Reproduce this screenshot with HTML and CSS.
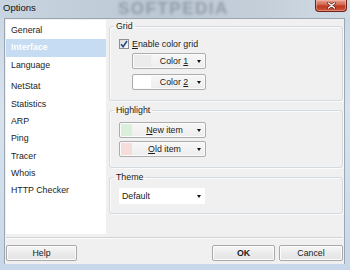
FILE: index.html
```html
<!DOCTYPE html>
<html>
<head>
<meta charset="utf-8">
<link rel="stylesheet" href="styles.css">
</head>
<body>
<div class="win">
  <div class="title">
    <span class="ttl">Options</span>
    <div class="wm-title">SOFTPEDIA</div>
    <div class="close">
      <svg width="9" height="7" viewBox="0 0 9 7"><path d="M1.5 1 L7.5 6 M7.5 1 L1.5 6" stroke="#5a1a12" stroke-width="2.6" stroke-linecap="round"/><path d="M1.5 1 L7.5 6 M7.5 1 L1.5 6" stroke="#ffffff" stroke-width="1.4" stroke-linecap="round"/></svg>
    </div>
  </div>
  <div class="client">
    <div class="main">
      <ul class="nav">
        <li>General</li>
        <li class="sel">Interface</li>
        <li>Language</li>
        <li class="grp-start">NetStat</li>
        <li>Statistics</li>
        <li>ARP</li>
        <li>Ping</li>
        <li>Tracer</li>
        <li>Whois</li>
        <li>HTTP Checker</li>
      </ul>
      <div class="pane">
        <fieldset class="grp">
          <legend>Grid</legend>
          <div class="gbody grid-body">
            <label class="chk-row">
              <span class="chk"><svg width="8" height="8" viewBox="0 0 8 8"><path d="M1 4.2 L3.1 6.6 L7 1" fill="none" stroke="#2b4a8c" stroke-width="1.6"/></svg></span>
              <span><u>E</u>nable color grid</span>
            </label>
            <div class="colors">
              <div class="cbtn"><span class="sw sw-grey"></span><span class="ctext">Color <u>1</u></span><span class="arr"></span></div>
              <div class="cbtn"><span class="sw sw-white"></span><span class="ctext">Color <u>2</u></span><span class="arr"></span></div>
            </div>
          </div>
        </fieldset>
        <fieldset class="grp grp-hl">
          <legend>Highlight</legend>
          <div class="gbody hl-body">
            <div class="cbtn hbtn"><span class="sw2 sw-green"></span><span class="ctext"><u>N</u>ew item</span><span class="arr"></span></div>
            <div class="cbtn hbtn"><span class="sw2 sw-pink"></span><span class="ctext"><u>O</u>ld item</span><span class="arr"></span></div>
          </div>
        </fieldset>
        <fieldset class="grp grp-theme">
          <legend>Theme</legend>
          <div class="gbody theme-body">
            <div class="combo"><span class="ctext-l">Default</span><span class="arr"></span></div>
          </div>
        </fieldset>
      </div>
    </div>
    <div class="sep"></div>
    <div class="foot">
      <div class="btn help">Help</div>
      <div class="btn ok">OK</div>
      <div class="btn cancel">Cancel</div>
    </div>
  </div>
</div>
</body>
</html>
```

FILE: styles.css
```css
* { box-sizing: border-box; }
html, body { margin: 0; padding: 0; }
body {
  width: 350px;
  height: 270px;
  overflow: hidden;
  font-family: "Liberation Sans", Arial, sans-serif;
  font-size: 8.8px;
  color: #1b1b1b;
}
.win {
  position: relative;
  width: 350px;
  height: 270px;
  display: flex;
  flex-direction: column;
  background: linear-gradient(#c9d6e3, #d9e3ed 40%, #c8d8ea);
  overflow: hidden;
}
.title {
  position: relative;
  height: 18px;
  flex: none;
  display: flex;
  align-items: flex-start;
  background: linear-gradient(90deg, #c8d4e0, #bcc8d4 45%, #c4cfda 75%, #d1dbe5);
}
.ttl {
  position: relative;
  z-index: 2;
  margin: 2px 0 0 3px;
  font-size: 9.5px;
  line-height: 11px;
  color: #111;
}
.wm-title {
  position: absolute;
  left: 118px;
  top: 0;
  font-size: 17px;
  line-height: 17px;
  font-weight: bold;
  letter-spacing: 1.5px;
  color: rgba(85, 96, 108, 0.42);
  filter: blur(1.4px);
  z-index: 1;
}
.close {
  position: relative;
  z-index: 2;
  margin-left: auto;
  margin-right: 3px;
  width: 32px;
  height: 12px;
  border: 1px solid #6d2219;
  border-top: none;
  border-radius: 0 0 4px 4px;
  background: linear-gradient(#e6a08f, #d46a55 40%, #bf3a22 55%, #c9553b);
  box-shadow: inset 0 0 0 1px rgba(255, 200, 190, 0.45);
  display: flex;
  align-items: center;
  justify-content: center;
}
.close svg { display: block; }
.client {
  position: relative;
  flex: none;
  margin-left: 4px;
  width: 341px;
  height: 246px;
  border: 1px solid #9aa6b2;
  border-bottom: none;
  background: #f0f0f0;
  display: flex;
  flex-direction: column;
}
.main {
  display: flex;
  padding: 1px 1px 0 1px;
  flex: none;
}
.nav {
  width: 100px;
  height: 214px;
  margin: 0;
  padding: 2px 0 0 0;
  list-style: none;
  background: #fff;
}
.nav li {
  height: 17.33px;
  line-height: 17.33px;
  padding-left: 5px;
  white-space: nowrap;
}
.nav li.sel {
  background: #c5dcf3;
  color: #fff;
  font-weight: bold;
}
.nav li.grp-start { margin-top: 4.4px; }
.pane {
  margin-left: 3px;
  width: 234px;
  display: flex;
  flex-direction: column;
}
fieldset.grp {
  margin: 0;
  padding: 0;
  min-width: 0;
  border: 1px solid #d3dbe1;
  border-radius: 3px;
  box-shadow: inset 1px 1px 0 #fbfbfb, 1px 1px 0 #fbfbfb;
}
fieldset.grp legend {
  margin-left: 4px;
  padding: 0 2px;
  line-height: 12px;
  color: #1b1b1b;
}
.grp-hl, .grp-theme { margin-top: 3px !important; }
.gbody { padding-left: 9px; }
.grid-body { padding-top: 7px; padding-bottom: 10px; }
.hl-body { padding-top: 6px; padding-bottom: 10px; display: flex; flex-direction: column; gap: 3px; }
.theme-body { padding-top: 5px; padding-bottom: 9px; }
.chk-row {
  display: flex;
  align-items: center;
  height: 10px;
  gap: 3px;
}
.chk {
  width: 10px;
  height: 10px;
  border: 1px solid #8e8f8f;
  background: linear-gradient(135deg, #dcdcdc, #fafafa);
  display: flex;
  align-items: center;
  justify-content: center;
}
.chk svg { display: block; }
.colors {
  margin: 4px 0 0 13px;
  display: flex;
  flex-direction: column;
  gap: 5px;
}
.cbtn {
  width: 74px;
  height: 16px;
  border: 1px solid #adadad;
  border-radius: 2px;
  background: linear-gradient(#f7f7f7, #ededed);
  box-shadow: inset 0 0 0 1px #fbfbfb;
  display: flex;
  align-items: center;
  padding: 0 3px 0 1px;
}
.hbtn { width: 87px; }
.sw { width: 17px; height: 12px; flex: none; }
.sw-grey { background: #ebebeb; }
.sw-white { background: #ffffff; }
.sw2 { width: 11px; height: 12px; flex: none; }
.sw-green { background: #d9efd9; }
.sw-pink { background: #f7dcdc; }
.ctext {
  flex: 1;
  text-align: center;
  white-space: nowrap;
  line-height: 12px;
}
.arr {
  flex: none;
  width: 0;
  height: 0;
  border-left: 2.5px solid transparent;
  border-right: 2.5px solid transparent;
  border-top: 3px solid #111;
  margin-right: 1px;
}
.combo {
  width: 86px;
  height: 16px;
  background: #fff;
  display: flex;
  align-items: center;
  padding: 0 3px 0 3px;
}
.ctext-l { flex: 1; line-height: 12px; }
.sep {
  margin: 3px 1px 0 1px;
  height: 2px;
  border-top: 1px solid #d2d2d2;
  border-bottom: 1px solid #fcfcfc;
  flex: none;
}
.foot {
  display: flex;
  padding: 0 1px;
  margin-top: 6px;
  gap: 4px;
}
.btn {
  height: 16px;
  border: 1px solid #a9a9a9;
  border-radius: 2px;
  background: linear-gradient(#f7f7f7, #ebebeb 50%, #e4e4e4);
  box-shadow: inset 0 0 0 1px #fcfcfc;
  display: flex;
  align-items: center;
  justify-content: center;
  line-height: 12px;
}
.help { width: 71px; }
.ok { width: 63px; margin-left: auto; font-weight: bold; }
.cancel { width: 64px; }
```
